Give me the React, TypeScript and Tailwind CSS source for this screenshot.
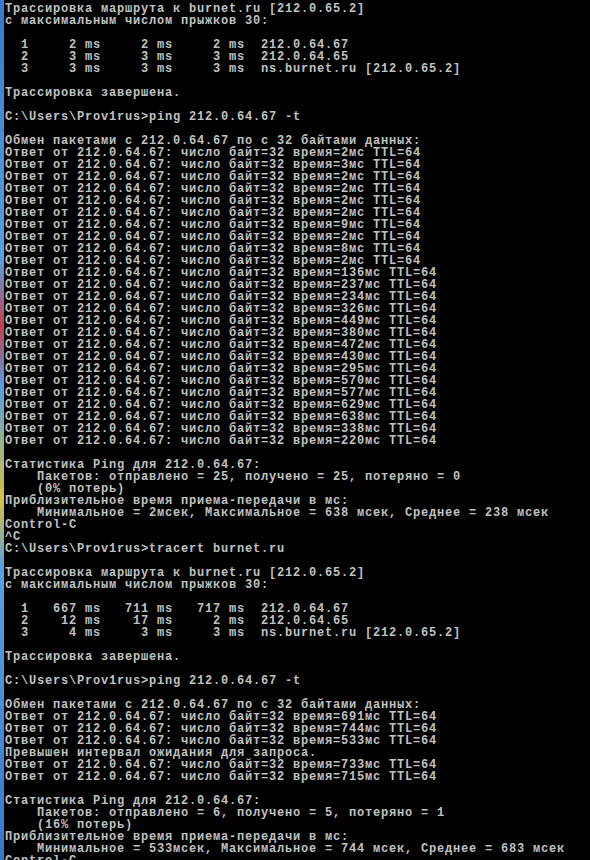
import React from 'react';

const shortTimes = [2, 3, 2, 2, 2, 2, 9, 2, 8, 2];
const longTimes = [136, 237, 234, 326, 449, 380, 472, 430, 295, 570, 577, 629, 638, 338, 220];

const reply = (ms: number) => `Ответ от 212.0.64.67: число байт=32 время=${ms}мс TTL=64`;

const lines: string[] = [
  'Трассировка маршрута к burnet.ru [212.0.65.2]',
  'с максимальным числом прыжков 30:',
  '',
  '  1     2 ms     2 ms     2 ms  212.0.64.67',
  '  2     3 ms     3 ms     3 ms  212.0.64.65',
  '  3     3 ms     3 ms     3 ms  ns.burnet.ru [212.0.65.2]',
  '',
  'Трассировка завершена.',
  '',
  'C:\\Users\\Prov1rus>ping 212.0.64.67 -t',
  '',
  'Обмен пакетами с 212.0.64.67 по с 32 байтами данных:',
  ...shortTimes.map(reply),
  ...longTimes.map(reply),
  '',
  'Статистика Ping для 212.0.64.67:',
  '    Пакетов: отправлено = 25, получено = 25, потеряно = 0',
  '    (0% потерь)',
  'Приблизительное время приема-передачи в мс:',
  '    Минимальное = 2мсек, Максимальное = 638 мсек, Среднее = 238 мсек',
  'Control-C',
  '^C',
  'C:\\Users\\Prov1rus>tracert burnet.ru',
  '',
  'Трассировка маршрута к burnet.ru [212.0.65.2]',
  'с максимальным числом прыжков 30:',
  '',
  '  1   667 ms   711 ms   717 ms  212.0.64.67',
  '  2    12 ms    17 ms     2 ms  212.0.64.65',
  '  3     4 ms     3 ms     3 ms  ns.burnet.ru [212.0.65.2]',
  '',
  'Трассировка завершена.',
  '',
  'C:\\Users\\Prov1rus>ping 212.0.64.67 -t',
  '',
  'Обмен пакетами с 212.0.64.67 по с 32 байтами данных:',
  reply(691),
  reply(744),
  reply(533),
  'Превышен интервал ожидания для запроса.',
  reply(733),
  reply(715),
  '',
  'Статистика Ping для 212.0.64.67:',
  '    Пакетов: отправлено = 6, получено = 5, потеряно = 1',
  '    (16% потерь)',
  'Приблизительное время приема-передачи в мс:',
  '    Минимальное = 533мсек, Максимальное = 744 мсек, Среднее = 683 мсек',
  'Control-C',
];

export default function App() {
  return (
    <div className="flex h-[860px] w-[590px] overflow-hidden bg-black">
      {/* window edge showing through on the left */}
      <div className="w-[4px] shrink-0 bg-[linear-gradient(to_bottom,#3a78c8_0%,#5aa0e0_30%,#c04050_38%,#5aa0e0_45%,#d8c040_58%,#5aa0e0_66%,#3a78c8_100%)]" />
      <div className="pl-[1px] pt-[3px] font-['Liberation_Mono','DejaVu_Sans_Mono',monospace] text-[12px] font-bold leading-[12px] tracking-[0.8px] text-[#c0c0c0]">
        {lines.map((line, i) => (
          <div key={i} className="h-[12px] whitespace-pre">
            {line}
          </div>
        ))}
      </div>
    </div>
  );
}
